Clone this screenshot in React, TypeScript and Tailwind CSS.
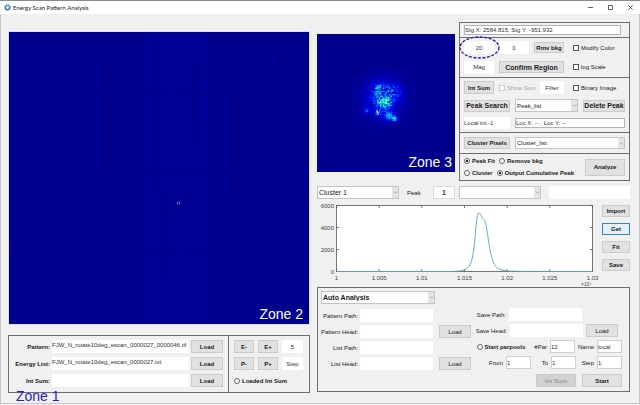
import React from 'react';
import { ChevronDown } from 'lucide-react';

const BUTTON = 'flex items-center justify-center border leading-none whitespace-nowrap';
const FIELD = 'min-w-0 bg-white leading-none text-[#333]';
const PANEL = 'border border-[#6e6e6e]';

interface ButtonProps {
  className?: string;
  active?: boolean;
  disabled?: boolean;
  children: React.ReactNode;
}

const Button: React.FC<ButtonProps> = ({ className = '', active, disabled, children }) => (
  <button
    type="button"
    disabled={disabled}
    className={`${BUTTON} ${active ? 'border-[#2f86cc] bg-[#e5f1fb]' : 'border-[#cbcbcb] bg-[#e1e1e1] disabled:bg-[#d2d2d2] disabled:text-[#9a9a9a]'} ${className}`}
  >
    {children}
  </button>
);

const Field: React.FC<{ id?: string; label?: string; value?: string; className?: string }> = ({ id, label, value = '', className = '' }) => (
  <input id={id} aria-label={label} type="text" defaultValue={value} className={`${FIELD} ${className}`} />
);

const Select: React.FC<{ label: string; value?: string; className?: string }> = ({ label, value = '', className = '' }) => (
  <div className={`relative min-w-0 ${className}`}>
    <select aria-label={label} className="block h-full w-full appearance-none border border-[#c4c4c4] bg-white pl-px leading-none">
      <option>{value}</option>
    </select>
    <span className="pointer-events-none absolute inset-y-px right-px flex w-[6px] items-center justify-center bg-[#e4e4e4]">
      <ChevronDown className="size-[5px] text-[#555]" />
    </span>
  </div>
);

const Check: React.FC<{ label: string; disabled?: boolean; className?: string }> = ({ label, disabled, className = '' }) => (
  <label className={`flex items-center gap-[2px] whitespace-nowrap ${disabled ? 'text-[#a5a5a5]' : ''} ${className}`}>
    <input
      type="checkbox"
      disabled={disabled}
      className="size-[6px] shrink-0 appearance-none border border-[#555] bg-white checked:bg-[#555] disabled:border-[#ccc]"
    />
    {label}
  </label>
);

const Radio: React.FC<{ name: string; label: string; checked?: boolean }> = ({ name, label, checked }) => (
  <label className="flex items-center gap-[2px] font-bold whitespace-nowrap">
    <input
      type="radio"
      name={name}
      defaultChecked={checked}
      className="size-[6px] shrink-0 appearance-none rounded-full border border-[#666] bg-white checked:bg-[radial-gradient(circle,#222_45%,#fff_55%)]"
    />
    {label}
  </label>
);

const TitleBar = () => (
  <header className="flex h-[14px] items-center border-t border-[#8a8a8a] bg-white pl-1">
    <svg className="size-[7px]" viewBox="0 0 14 14" fill="none" stroke="#2b76b9">
      <circle cx="7" cy="7" r="4" strokeWidth="2.2" />
      <circle cx="7" cy="7" r="5.9" strokeWidth="2" strokeDasharray="2.3 2.33" />
    </svg>
    <h1 className="ml-[2px] flex-1 font-['Lato',sans-serif] text-[6px] leading-none">Energy Scan Pattern Analysis</h1>
    <div className="flex h-full">
      <button type="button" aria-label="Minimize" className="flex w-5 items-center justify-center">
        <svg className="size-[5px]" viewBox="0 0 5 5" stroke="#222" strokeWidth="0.7"><path d="M0 2.5h5" /></svg>
      </button>
      <button type="button" aria-label="Maximize" className="flex w-5 items-center justify-center">
        <svg className="size-[5px]" viewBox="0 0 5 5" fill="none" stroke="#222" strokeWidth="0.7"><path d="M.5.5h4v4h-4z" /></svg>
      </button>
      <button type="button" aria-label="Close" className="flex w-5 items-center justify-center">
        <svg className="size-[5px]" viewBox="0 0 5 5" stroke="#222" strokeWidth="0.7"><path d="M.3.3l4.4 4.4M4.7.3L.3 4.7" /></svg>
      </button>
    </div>
  </header>
);

// faint seams between detector tiles: x, y, height
const SEAMS = [
  [26, 40, 180], [73, 10, 250], [99, 4, 240], [149, 10, 150], [157, 160, 90],
  [183, 30, 80], [201, 0, 290], [227, 50, 170], [249, 4, 180], [277, 8, 250],
];

const DetectorImage = () => (
  <div className="relative border border-[#dcdcf6] bg-[#00008f]">
    <svg className="block h-auto w-full" viewBox="0 0 300 292">
      <rect width="300" height="292" fill="#00008f" />
      <rect x="135" width="66" height="292" fill="#000096" opacity="0.5" />
      {SEAMS.map(([x, y, h]) => <rect key={x} x={x} y={y} width="1.6" height={h} fill="#00006c" opacity="0.28" />)}
      {SEAMS.map(([x, y, h]) => <rect key={x} x={x + 14} y={y + 20} width="1" height={h / 2} fill="#0000ac" opacity="0.4" />)}
      <path d="M0 61h300M0 139h300M0 222h300" stroke="#00007a" opacity="0.25" />
      <path d="M150 161h14M174 161h12M158 166h26M152 177h34" stroke="#00006c" strokeDasharray="2 3" opacity="0.6" />
      <circle cx="169.500" cy="171" r="1.400" fill="#00008f" stroke="#a8c4b8" strokeWidth="0.8" strokeDasharray="1.400 0.8" />
    </svg>
    <span className="absolute right-[6px] bottom-px text-[14px] leading-[18px] text-white">Zone 2</span>
  </div>
);

const jet = (v: number) => {
  const ch = (c: number) => Math.round(255 * Math.max(0, Math.min(1, 1.5 - Math.abs(4 * v - c))));
  return `rgb(${ch(3)},${ch(2)},${ch(1)})`;
};

// x, y, radius, strength, grain
const SPOTS = [
  [65, 64, 13, 0.11, 0.6],
  [64, 58, 8, 0.1, 0.8],
  [67, 68, 4.5, 0.26, 0.4],
  [78, 57, 5, 0.08, 0.8],
  [61, 53, 2, 0.12, 0.8],
  [71, 81, 3, 0.28, 0.2],
  [77, 84, 1.8, 0.4, 0.1],
  [60, 78, 2.4, 0.14, 0.6],
  [49, 76, 1.5, 0.2, 0.3],
];

const noise = (x: number, y: number) => {
  const n = Math.sin(x * 12.9898 + y * 78.233) * 43758.5453;
  return n - Math.floor(n);
};

const CELL = 1.5;
const cells: { x: number; y: number; fill: string }[] = [];
for (let i = 14; i < 74; i++) {
  for (let j = 14; j < 74; j++) {
    const x = i * CELL;
    const y = j * CELL;
    const grain = noise(i, j);
    const v = SPOTS.reduce((sum, [sx, sy, r, s, g]) => {
      const d = (x - sx) ** 2 + (y - sy) ** 2;
      return sum + s * Math.exp(-d / (2 * r * r)) * (1 - g + 2 * g * grain);
    }, 0.015);
    if (v > 0.018) cells.push({ x, y, fill: jet(v) });
  }
}

const RegionImage = () => (
  <div className="relative mt-3 bg-[#00008f]">
    <svg className="block h-auto w-full" viewBox="0 0 138 138">
      <rect width="138" height="138" fill="#00008f" />
      {cells.map(c => <rect key={`${c.x}-${c.y}`} x={c.x} y={c.y} width="1.6" height="1.6" fill={c.fill} />)}
      <path d="M60 76v2l1 1v2" fill="none" stroke="#efeec0" />
      <path d="M61.500 76v1.500" stroke="#000030" />
    </svg>
    <span className="absolute right-[3px] bottom-px text-[14px] leading-[18px] text-white">Zone 3</span>
  </div>
);

const ControlPanel = () => (
  <section className={`${PANEL} divide-y divide-[#6e6e6e]`}>
    <div className="flex h-[15px] items-center pr-2 pl-1">
      <Field label="Stage position" value="Stg X: 2584.815; Stg Y: -951.932" className="h-[10px] flex-1 border border-[#b4b4b4]" />
    </div>

    <div className="grid h-10 grid-cols-[30px_30px_30px_1fr] items-center gap-x-[5px] px-1">
      <div className="relative">
        <Field label="Magnification" value="20" className="h-[13px] w-full text-center" />
        <svg className="pointer-events-none absolute -top-[5px] -left-[5px] h-[23px] w-[41px]" viewBox="0 0 41 23" fill="none">
          <ellipse cx="20.500" cy="11.500" rx="19.500" ry="10.500" stroke="#1c1cb4" strokeWidth="1.300" strokeDasharray="3 1.500" />
        </svg>
      </div>
      <Field label="Background" value="0" className="h-[13px] text-center" />
      <Button className="h-[11px] font-bold">Rmv bkg</Button>
      <Check label="Modify Color" className="pl-1" />
      <Field label="Mag" value="Mag" className="h-[13px] text-center" />
      <Button className="col-span-2 h-[12px] text-[7px] font-bold">Confirm Region</Button>
      <Check label="log Scale" className="pl-1" />
    </div>

    <div className="flex h-[55px] flex-col justify-between px-1 py-[3px]">
      <div className="flex items-center gap-[5px]">
        <Button className="h-[13px] w-[30px] font-bold">Int Sum</Button>
        <Check label="Show Sum" disabled className="w-9" />
        <Field label="Filter" value="Filter" className="h-[13px] w-6 text-center" />
        <Check label="Binary Image" className="pl-1" />
      </div>
      <div className="flex items-center gap-[5px]">
        <Button className="h-[12px] w-[46px] text-[7px] font-bold">Peak Search</Button>
        <Select label="Peak list" value="Peak_list" className="h-[13px] flex-1" />
        <Button className="h-[12px] w-[42px] text-[7px] font-bold">Delete Peak</Button>
      </div>
      <div className="flex items-center gap-[5px]">
        <Field label="Local intensity" value="Local int.-1" className="h-[12px] w-[46px]" />
        <Field label="Location" value="Loc X: -- ; Loc Y: --" className="h-[10px] flex-1 border border-[#b4b4b4]" />
      </div>
    </div>

    <div className="flex h-[21px] items-center gap-[5px] px-1">
      <Button className="h-[12px] w-[46px] font-bold">Cluster Pixels</Button>
      <Select label="Cluster list" value="Cluster_list" className="h-[12px] flex-1" />
    </div>

    <div className="flex h-[26px] items-center justify-between px-1">
      <div className="flex flex-col gap-1">
        <div className="flex gap-1">
          <Radio name="fit" label="Peak Fit" checked />
          <Radio name="output" label="Remove bkg" />
        </div>
        <div className="flex gap-1">
          <Radio name="fit" label="Cluster" />
          <Radio name="output" label="Output Cumulative Peak" checked />
        </div>
      </div>
      <Button className="h-[17px] w-10 font-bold">Analyze</Button>
    </div>
  </section>
);

const X_TICKS = ['1', '1.005', '1.01', '1.015', '1.02', '1.025', '1.03'];
const Y_TICKS = ['6000', '4000', '2000', '0'];

const PeakChart = () => (
  <svg className="block h-auto min-w-0 flex-1" viewBox="0 0 282 88" fontSize="6" fill="#444">
    <rect x="19.500" y="6.500" width="256" height="66" fill="#fff" stroke="#555" strokeWidth="0.8" />
    {X_TICKS.map((t, i) => {
      const x = 19.5 + (i * 256) / 6;
      return (
        <g key={t}>
          <path d={`M${x} 72.500v-2.500M${x} 6.500v2.500`} stroke="#555" strokeWidth="0.8" />
          <text x={x} y="81" textAnchor="middle">{t}</text>
        </g>
      );
    })}
    {Y_TICKS.map((t, i) => (
      <g key={t}>
        <path d={`M19.500 ${6.5 + i * 22}h2.500M275.500 ${6.5 + i * 22}h-2.500`} stroke="#555" strokeWidth="0.8" />
        <text x="17" y={9 + i * 22} textAnchor="end">{t}</text>
      </g>
    ))}
    <text x="264" y="87" fontSize="5">×10⁴</text>
    <path
      d="M19.500 72.500H134C142 72.300 147 71.500 150 69.500C155 66 156.500 55 158 39C159 27 160 14.500 161.500 14C163.500 13.500 164 17 165.500 19C167 21 168 21.500 169 26C171 36 172.500 52 175.500 61C178 68 181 71.200 189 71.800C195 72.300 204 72.500 275.500 72.500"
      fill="none"
      stroke="#5aa2cc"
      strokeWidth="0.9"
    />
  </svg>
);

const PATH_ROWS = [
  { id: 'pattern-path', label: 'Pattern Path:', load: false },
  { id: 'pattern-head', label: 'Pattern Head:', load: true },
  { id: 'list-path', label: 'List Path:', load: false },
  { id: 'list-head', label: 'List Head:', load: true },
];

const SMALL_FIELD = 'h-[13px] w-[25px] border border-[#d0d0d0]';

const AutoAnalysis = () => (
  <section className={`${PANEL} flex h-[105px] justify-between pt-[3px] pr-[7px] pl-[3px]`}>
    <div className="flex flex-col gap-[3px]">
      <Select label="Analysis mode" value="Auto Analysis" className="mb-[2px] h-[13px] w-[114px] text-[7px] font-bold" />
      {PATH_ROWS.map(row => (
        <div key={row.id} className="flex h-[13px] items-center gap-[2px]">
          <label htmlFor={row.id} className="w-[37px] text-right whitespace-nowrap">{row.label}</label>
          <Field id={row.id} className="h-[13px] w-[73px]" />
          {row.load && <Button className="ml-1 h-[13px] w-8">Load</Button>}
        </div>
      ))}
    </div>

    <div className="flex flex-col items-end gap-[3px] pt-[17px]">
      <div className="flex items-center gap-[3px] pr-10">
        <label htmlFor="save-path">Save Path:</label>
        <Field id="save-path" className="h-[13px] w-[73px]" />
      </div>
      <div className="flex items-center gap-[3px] pr-1">
        <label htmlFor="save-head">Save Head:</label>
        <Field id="save-head" className="h-[13px] w-[73px]" />
        <Button className="h-[13px] w-8">Load</Button>
      </div>
      <div className="flex items-center gap-[3px]">
        <div className="mr-[6px]"><Radio name="parpools" label="Start parpools" /></div>
        <label htmlFor="par">#Par</label>
        <Field id="par" value="12" className={SMALL_FIELD} />
        <label htmlFor="name">Name</label>
        <Field id="name" value="local" className={SMALL_FIELD} />
      </div>
      <div className="flex items-center gap-[3px]">
        <label htmlFor="from">From</label>
        <Field id="from" value="1" className={SMALL_FIELD} />
        <label htmlFor="to" className="w-[14px] text-right">To</label>
        <Field id="to" value="1" className={SMALL_FIELD} />
        <label htmlFor="step" className="w-[15px] text-right">Step</label>
        <Field id="step" value="1" className={SMALL_FIELD} />
      </div>
      <div className="mt-[2px] flex gap-[6px]">
        <Button disabled className="h-[13px] w-10 font-bold">Int Sum</Button>
        <Button className="h-[13px] w-10 font-bold">Start</Button>
      </div>
    </div>
  </section>
);

const FILES = [
  { id: 'pattern', label: 'Pattern:', value: 'FJW_N_rotate10deg_escan_0000027_0000046.tif' },
  { id: 'energy', label: 'Energy List:', value: 'FJW_N_rotate10deg_escan_0000027.txt' },
  { id: 'intsum', label: 'Int Sum:', value: '' },
];

const FilePanel = () => (
  <section className={`${PANEL} relative flex h-[58px]`}>
    <div className="flex flex-1 flex-col gap-1 border-r border-[#6e6e6e] pt-1 pr-[5px] pl-[3px]">
      {FILES.map(f => (
        <div key={f.id} className="flex items-center gap-[2px]">
          <label htmlFor={f.id} className="w-[38px] text-right font-bold whitespace-nowrap">{f.label}</label>
          <Field id={f.id} value={f.value} className="h-[13px] flex-1 pb-1" />
          <Button className="h-[13px] w-8 font-bold">Load</Button>
        </div>
      ))}
    </div>
    <div className="flex w-[80px] flex-col gap-1 pt-1 pl-[5px]">
      <div className="flex gap-1">
        <Button className="h-[13px] w-5 font-bold">E-</Button>
        <Button className="h-[13px] w-5 font-bold">E+</Button>
        <Field label="Energy step" value="5" className="h-[13px] w-[21px] text-center" />
      </div>
      <div className="flex gap-1">
        <Button className="h-[13px] w-5 font-bold">P-</Button>
        <Button className="h-[13px] w-5 font-bold">P+</Button>
        <Field label="Pattern step" value="Step" className="h-[13px] w-[21px] text-center" />
      </div>
      <div className="flex h-[13px] items-center">
        <Radio name="loaded" label="Loaded Int Sum" />
      </div>
    </div>
    <span className="absolute top-[51px] left-[7px] text-[14px] leading-[18px] text-[#2a1cd2]">Zone 1</span>
  </section>
);

export default function App() {
  return (
    <div className="min-h-screen bg-[#f0f0f0] font-['Liberation_Sans',Arial,sans-serif] text-[6px] leading-[8px] text-[#1a1a1a]">
      <TitleBar />
      <main className="grid grid-cols-[302fr_313fr] gap-[7px] border-x border-b border-[#c8c8c8] pr-[9px] pb-[10px] pl-[7px]">
        <div className="flex flex-col gap-[10px] pt-[17px]">
          <DetectorImage />
          <FilePanel />
        </div>

        <div className="flex flex-col pt-2">
          <div className="grid grid-cols-[138fr_171fr] items-start gap-1">
            <RegionImage />
            <ControlPanel />
          </div>

          <div className="mt-[5px] flex h-[13px] items-center text-[7px]">
            <Select label="Cluster" value="Cluster 1" className="h-[13px] w-[82px]" />
            <label htmlFor="peak" className="ml-2 flex-1 text-[6px]">Peak</label>
            <Field id="peak" value="1" className="h-[13px] w-[22px] border border-[#dcdcdc] text-center font-bold" />
            <Select label="Fit type" className="ml-1 h-[13px] w-[82px]" />
            <Field label="Fit result" className="ml-2 h-[13px] w-[81px]" />
          </div>

          <div className="flex items-start gap-[3px]">
            <PeakChart />
            <div className="flex w-7 flex-col gap-[6px] pt-[6px] font-bold">
              <Button className="h-[12px]">Import</Button>
              <Button active className="h-[12px]">Get</Button>
              <Button className="h-[12px]">Fit</Button>
              <Button className="h-[12px]">Save</Button>
            </div>
          </div>

          <AutoAnalysis />
        </div>
      </main>
    </div>
  );
}
